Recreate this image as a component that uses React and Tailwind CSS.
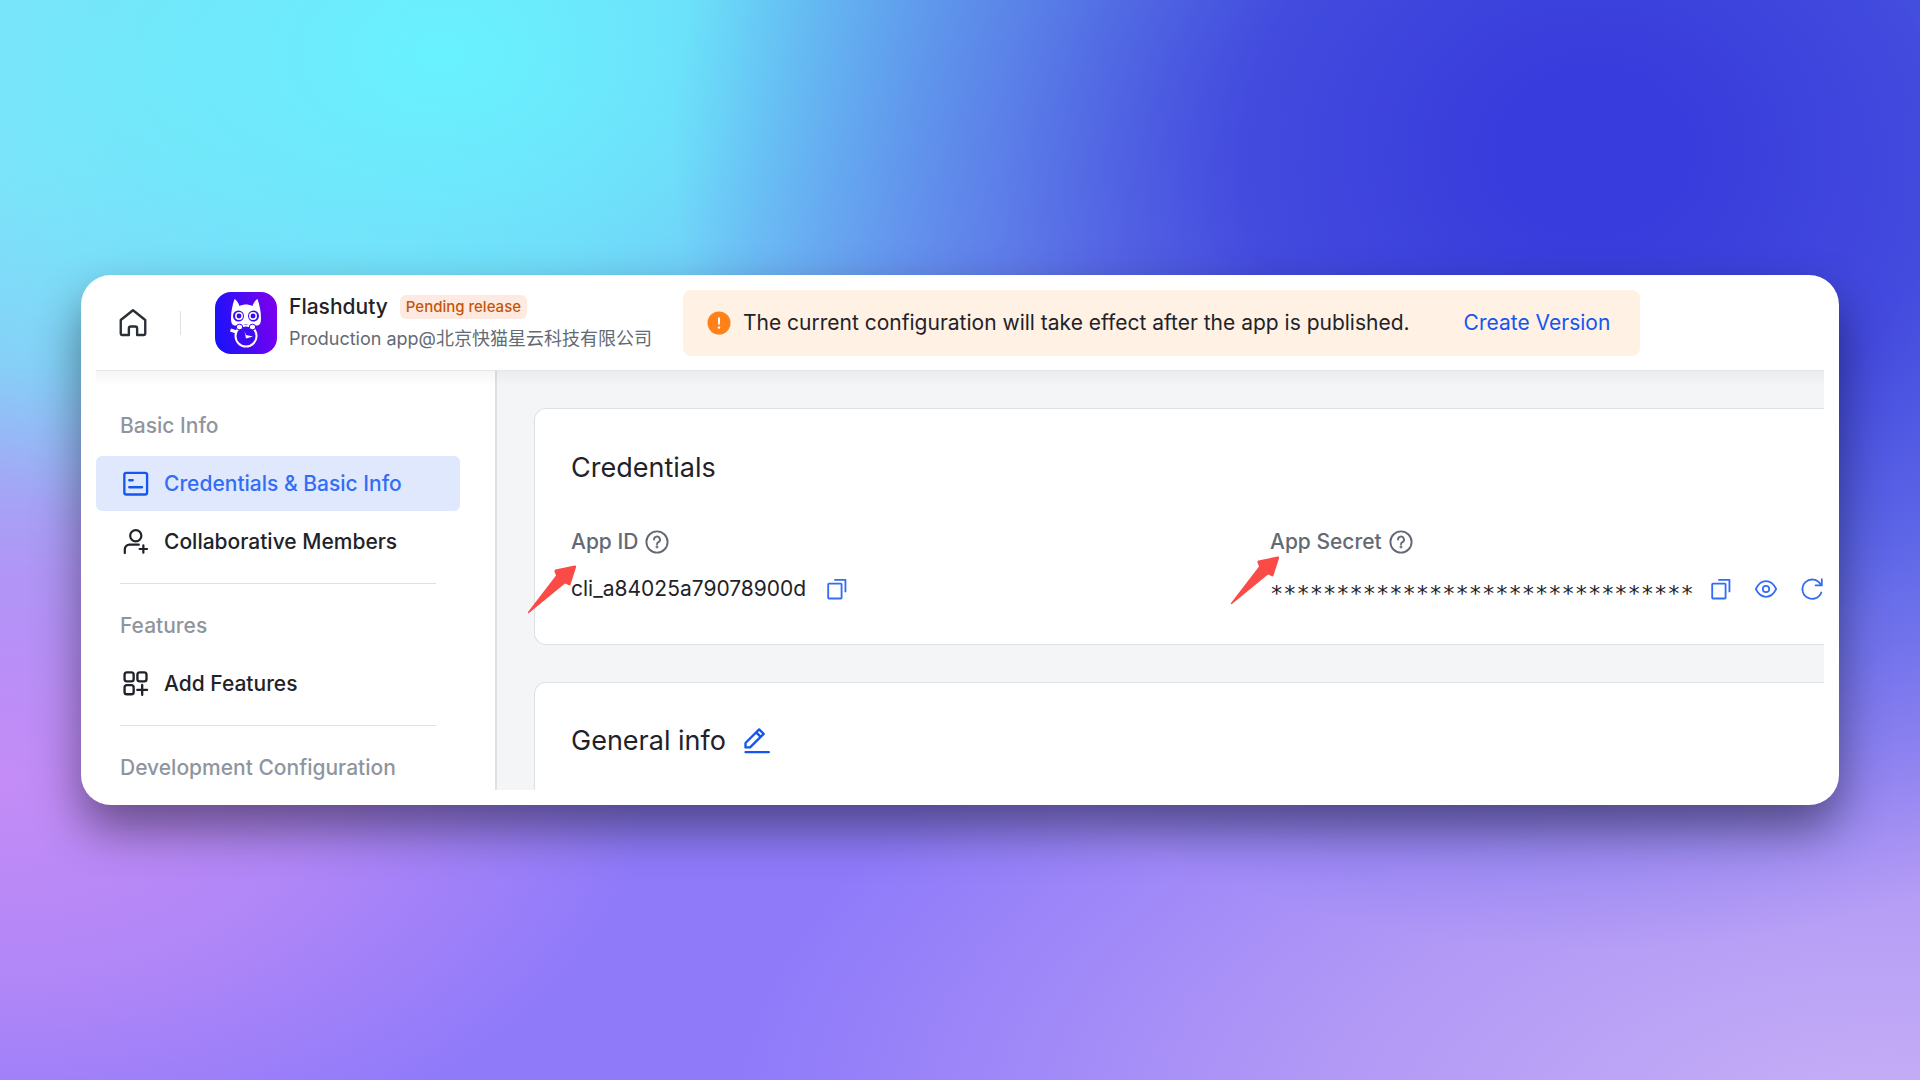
import clsx from "clsx";

const sidebar = [
  {
    title: "Basic Info",
    items: [
      { label: "Credentials & Basic Info", icon: CardIcon, active: true },
      { label: "Collaborative Members", icon: MemberIcon },
    ],
  },
  { title: "Features", items: [{ label: "Add Features", icon: FeaturesIcon }] },
  { title: "Development Configuration", items: [] },
];

function Svg({ size = 24, className, strokeWidth = 2, children }) {
  return (
    <svg
      width={size}
      height={size}
      viewBox="0 0 24 24"
      fill="none"
      stroke="currentColor"
      strokeWidth={strokeWidth}
      strokeLinecap="round"
      strokeLinejoin="round"
      className={clsx("shrink-0", className)}
      aria-hidden="true"
    >
      {children}
    </svg>
  );
}

function CardIcon() {
  return (
    <Svg size={28} className="text-[#1456f0]">
      <rect x="2" y="2.5" width="19.5" height="18.5" rx="1.8" />
      <path d="M6.2 8.8h3M6.2 14.8h11" />
    </Svg>
  );
}

function MemberIcon() {
  return (
    <Svg size={28} strokeWidth={1.9}>
      <circle cx="11.8" cy="6.6" r="4.8" />
      <path d="M2.4 21.5v-3.2a4 4 0 0 1 4-4h8M18.3 14.8v6.4M15.1 18h6.4" />
    </Svg>
  );
}

function FeaturesIcon() {
  return (
    <Svg size={28}>
      <rect x="2.2" y="2" width="7.8" height="7.8" rx="2" />
      <rect x="13.2" y="2" width="7.8" height="7.8" rx="2" />
      <rect x="2.2" y="13" width="7.8" height="7.8" rx="2" />
      <path d="M17.3 12.8v8.4M13.1 17h8.4" />
    </Svg>
  );
}

function HomeIcon() {
  return (
    <Svg size={30} strokeWidth={1.9}>
      <path d="M2.2 9.6 12 1.8l9.8 7.8v11a1 1 0 0 1-1 1h-5.5v-5.3a1.5 1.5 0 0 0-1.5-1.5h-3.6a1.5 1.5 0 0 0-1.5 1.5v5.3H3.2a1 1 0 0 1-1-1z" />
    </Svg>
  );
}

function HelpIcon() {
  return (
    <Svg size={24} strokeWidth={1.9}>
      <circle cx="12" cy="12" r="10.6" />
      <path d="M9 9.6a3 3 0 1 1 4.4 2.6c-.9.5-1.4 1-1.4 2" />
      <circle cx="12" cy="17" r="0.5" />
    </Svg>
  );
}

function CopyIcon() {
  return (
    <Svg size={22} strokeWidth={2}>
      <rect x="2.4" y="6.2" width="14.6" height="16.2" rx="0.8" />
      <path d="M9 2h12.2v13.6" strokeLinecap="butt" />
    </Svg>
  );
}

function EyeIcon() {
  return (
    <Svg size={24} strokeWidth={1.7}>
      <path d="M1.8 12C4.3 7 7.8 4.2 12 4.2S19.7 7 22.2 12C19.7 17 16.2 19.8 12 19.8S4.3 17 1.8 12z" />
      <circle cx="12" cy="12" r="3.2" />
    </Svg>
  );
}

function RefreshIcon() {
  return (
    <Svg size={24} strokeWidth={1.8}>
      <path d="M21.3 15.5A9.7 9.7 0 1 1 20.6 7.4M21.8 2.2v6.2h-6.2" />
    </Svg>
  );
}

function EditIcon() {
  return (
    <Svg size={28} strokeWidth={2}>
      <path d="M3 21.5h20" />
      <path d="M3 17.5V13.7L14.7 2.1l3.9 3.8L6.9 17.5zM12.2 4.6l3.8 3.9" />
    </Svg>
  );
}

function CatLogo() {
  return (
    <svg width="62" height="62" viewBox="0 0 62 62" className="shrink-0" role="img" aria-label="Flashduty">
      <defs>
        <linearGradient id="logo" x1="0" y1="0.6" x2="1" y2="0.4">
          <stop offset="0" stopColor="#1a12fa" />
          <stop offset="1" stopColor="#7a00ee" />
        </linearGradient>
      </defs>
      <rect width="62" height="62" rx="16" fill="url(#logo)" />
      <path
        fill="#fff"
        d="M19.5 7c2 1 4 4 5 7 4-2 9-2 13 0 1-3 3-6 5-7 2 6 3.500 12 3.500 19 0 5-1 7-3.500 7.500l-6 .5-5.500-2-5.500 2-6-.5C17 33 16 31 16 26c0-7 1.500-13 3.500-19z"
      />
      <g fill="#3a0cf5">
        <circle cx="23.5" cy="24" r="5.5" />
        <circle cx="38.5" cy="24" r="5.5" />
      </g>
      <g fill="none" stroke="#fff" strokeWidth="1.5">
        <circle cx="24" cy="24" r="3.2" />
        <circle cx="38" cy="24" r="3.2" />
        <circle cx="31" cy="44" r="10.5" fill="#400bf4" strokeWidth="2" />
      </g>
      <g fill="#fff" stroke="#3a0cf5" strokeWidth="1">
        <ellipse cx="24.5" cy="35" rx="3.2" ry="2.8" />
        <ellipse cx="37.5" cy="35" rx="3.2" ry="2.8" />
      </g>
      <path d="M15.5 38l6 2" stroke="#fff" strokeWidth="3" />
      <path d="M29.5 39l1.5 4 7 1.5-7 2z" fill="#fff" />
    </svg>
  );
}

// Red pointer drawn over the field labels
function Arrow({ className }) {
  return (
    <svg
      width="50"
      height="50"
      viewBox="0 0 50 50"
      className={clsx("pointer-events-none absolute", className)}
      aria-hidden="true"
    >
      <path
        d="M1 47 29 10.5 27.5 6.5q-.5-1.5 1-2L47.5.5q2.2-.3 1.5 2L43.5 19.5q-.7 1.5-2 .5L38 18.5 2 48q-1.5.5-1-1z"
        fill="#fa4b46"
      />
    </svg>
  );
}

function IconButton({ label, className, children }) {
  return (
    <button type="button" aria-label={label} className={clsx("shrink-0 cursor-pointer", className)}>
      {children}
    </button>
  );
}

function Header() {
  return (
    <header className="relative h-[81px] border-b border-[#eeeff0] bg-white">
      {/* soft shade under the bar */}
      <div className="pointer-events-none absolute top-full right-0 left-0 h-4 bg-linear-to-b from-black/4 to-transparent" />
      <div className="flex h-[66px] items-center">
        <a href="#home" aria-label="Home" className="ml-[22px] text-[#2b2f36]">
          <HomeIcon />
        </a>
        <div className="mr-[34px] ml-8 h-6 w-px bg-[#dee0e3]" />
        <CatLogo />
        <div className="ml-3 shrink-0">
          <div className="flex items-center gap-3">
            <h1 className="text-[21px] leading-8 font-medium">Flashduty</h1>
            <span className="rounded-md bg-[#feeae0] px-1.5 text-[15px] leading-6 font-medium text-[#c4560c]">
              Pending release
            </span>
          </div>
          <p className="text-[18px] leading-8 text-[#646a73]">Production app@北京快猫星云科技有限公司</p>
        </div>
        <div className="ml-[31px] flex h-full shrink-0 items-center rounded-lg bg-[#fff1e3] px-6">
          <svg width="24" height="24" viewBox="0 0 24 24" aria-hidden="true">
            <circle cx="12" cy="12" r="11.5" fill="#ff811a" />
            <path d="M12 6.5v7" stroke="#fff" strokeWidth="2" />
            <circle cx="12" cy="16.5" r="1.2" fill="#fff" />
          </svg>
          <p className="ml-3 text-[21px]">The current configuration will take effect after the app is published.</p>
          <a href="#version" className="mr-1.5 ml-[54px] text-[21px] text-[#1456f0]">
            Create Version
          </a>
        </div>
      </div>
    </header>
  );
}

function Sidebar() {
  return (
    <nav className="w-[401px] shrink-0 border-r-2 border-[#dee0e3] pr-[35px] pb-1">
      {sidebar.map(({ title, items }, i) => (
        <section key={title} className={i === 0 ? "pt-[37px]" : "pt-[14px]"}>
          {i > 0 && <hr className="mx-6 mb-6 border-[#dee0e3]" />}
          <h2 className="px-6 text-[21px] leading-9 font-medium text-[#8f959e]">{title}</h2>
          {items.length > 0 && (
            <ul className="mt-3 space-y-[3px]">
              {items.map(({ label, icon: Icon, active }) => (
                <li key={label}>
                  <a
                    href="#"
                    className={clsx(
                      "flex h-[55px] items-center gap-[14px] rounded-md pl-[26px] text-[21px] font-medium",
                      active ? "bg-[#e0e8fe] text-[#336df4]" : "text-[#1f2329]"
                    )}
                  >
                    <Icon />
                    {label}
                  </a>
                </li>
              ))}
            </ul>
          )}
        </section>
      ))}
    </nav>
  );
}

function Field({ label, value, masked, arrowClass, children }) {
  return (
    <div className="relative">
      <Arrow className={arrowClass} />
      <div className="flex h-8 items-center gap-[7px] text-[21px] font-medium text-[#646a73]">
        {label}
        <button type="button" aria-label={`About ${label}`}>
          <HelpIcon />
        </button>
      </div>
      <div className="mt-[15px] flex h-8 items-center">
        <span className={masked ? "pt-2 font-['DejaVu_Sans_Mono',monospace] text-[22px]" : "text-[21px]"}>{value}</span>
        {children}
      </div>
    </div>
  );
}

function Content() {
  return (
    <main className="flex min-w-0 flex-1 flex-col overflow-hidden bg-[#f4f5f7] pt-[37px] pl-[37px]">
      <section className="rounded-l-xl border border-r-0 border-[#dee0e3] bg-white pt-[39px] pb-[39px] pl-9">
        <h2 className="text-[27px] leading-10">Credentials</h2>
        <div className="mt-[38px] grid grid-cols-[1fr_554px]">
          <Field label="App ID" value="cli_a84025a79078900d" arrowClass="top-[39px] -left-11">
            <IconButton label="Copy App ID" className="ml-5 text-[#336df4]">
              <CopyIcon />
            </IconButton>
          </Field>
          <Field label="App Secret" value="********************************" masked arrowClass="top-[30px] -left-10">
            <IconButton label="Copy App Secret" className="ml-4 text-[#336df4]">
              <CopyIcon />
            </IconButton>
            <IconButton label="Show App Secret" className="ml-[22px] text-[#336df4]">
              <EyeIcon />
            </IconButton>
            <IconButton label="Reset App Secret" className="ml-[22px] text-[#336df4]">
              <RefreshIcon />
            </IconButton>
          </Field>
        </div>
      </section>
      <section className="mt-[37px] grow rounded-tl-xl border-t border-l border-[#dee0e3] bg-white pt-[38px] pl-9">
        <div className="flex items-center gap-4">
          <h2 className="text-[27px] leading-10">General info</h2>
          <IconButton label="Edit general info" className="text-[#1456f0]">
            <EditIcon />
          </IconButton>
        </div>
      </section>
    </main>
  );
}

export default function App() {
  return (
    <div className="flex min-h-screen items-center bg-[#9078f8] bg-[radial-gradient(ellipse_48%_74%_at_83%_14%,#383cdc_10%,#3e42dce8_38%,#4c54e090_64%,transparent),radial-gradient(ellipse_38%_50%_at_23%_5%,#68f2ff,#6aeefcc0_40%,transparent),radial-gradient(ellipse_34%_38%_at_0%_72%,#c48cf6,#c08cf6b0_50%,transparent),radial-gradient(ellipse_60%_55%_at_98%_105%,#c8b0f6,#c0a6f4b0_50%,transparent),radial-gradient(ellipse_40%_70%_at_0%_8%,#88dcf8_10%,#98c8f6c0_50%,transparent),linear-gradient(#6cacee,#8f7afa_80%)] px-[81px] font-[Inter,'Noto_Sans_CJK_SC',sans-serif] text-[#1f2329]">
      <div className="w-full rounded-[30px] bg-white p-[15px] shadow-[0_24px_48px_rgba(0,0,0,0.45)]">
        <Header />
        <div className="flex">
          <Sidebar />
          <Content />
        </div>
      </div>
    </div>
  );
}
